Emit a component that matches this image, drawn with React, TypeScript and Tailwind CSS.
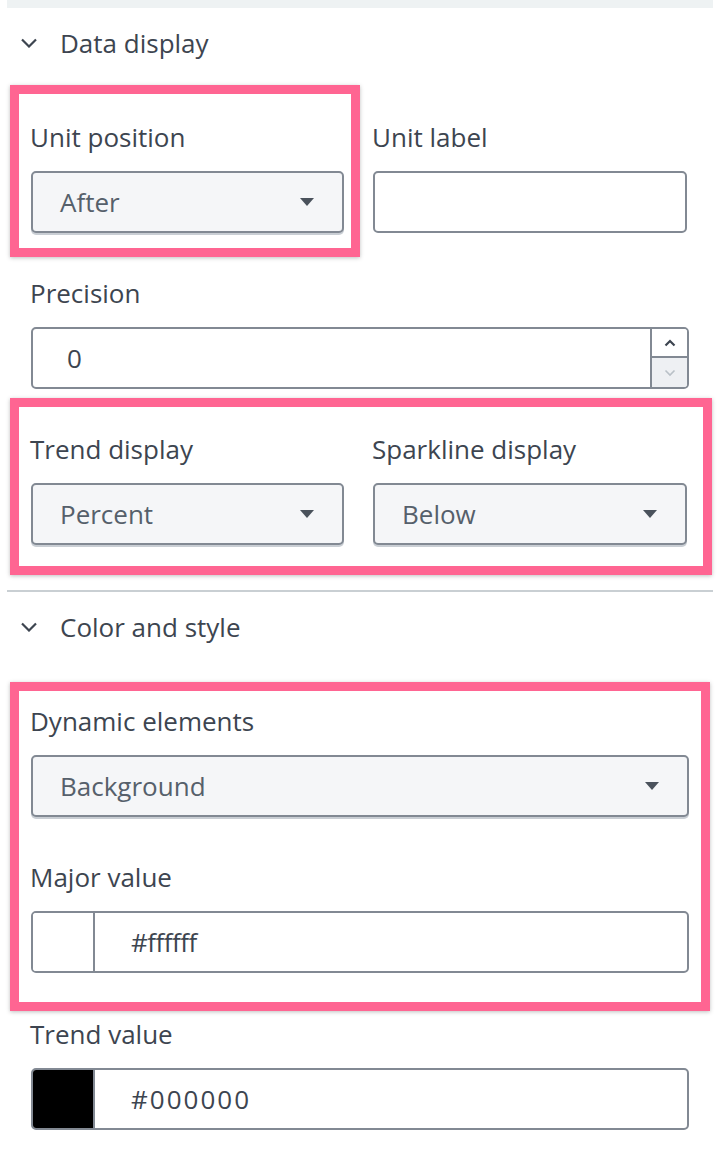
import React from "react";

const font = { fontFamily: "'Open Sans', 'Liberation Sans', sans-serif" };

function Chevron() {
  return (
    <svg width="18" height="10" viewBox="0 0 18 10" className="text-[#3d4550]">
      <path d="M2 1.5 L9 8.5 L16 1.5" fill="none" stroke="currentColor" strokeWidth="2.2" />
    </svg>
  );
}

function Caret() {
  return (
    <svg width="14" height="8" viewBox="0 0 14 8">
      <path d="M0 0 H14 L7 8 Z" fill="#4a525c" />
    </svg>
  );
}

function Highlight({ className }: { className: string }) {
  return (
    <div
      className={`pointer-events-none absolute border-[9px] border-[#ff6592] shadow-[0_1px_4px_rgba(0,0,0,0.25)] ${className}`}
    />
  );
}

function Label({ children }: { children: React.ReactNode }) {
  return <div className="-ml-px h-[32px] text-[26px] leading-[32px] text-[#3d4550]">{children}</div>;
}

function Select({ value }: { value: string }) {
  return (
    <div className="mt-[18px] flex h-[62px] items-center justify-between rounded-[5px] border-2 border-[#828993] bg-[#f5f6f8] pl-[27px] pr-[28px] shadow-[0_2px_0_#c9ced4]">
      <span className="text-[26px] text-[#56606b]">{value}</span>
      <Caret />
    </div>
  );
}

function ColorField({ swatch, value, track }: { swatch: string; value: string; track: string }) {
  return (
    <div className="mt-[18px] flex h-[62px] overflow-hidden rounded-[5px] border-2 border-[#828993] bg-white">
      <div className={`w-[62px] border-r-2 border-[#828993] ${swatch}`} />
      <div className={`flex items-center pl-[36px] text-[26px] text-[#3d4550] ${track}`}>{value}</div>
    </div>
  );
}

function Header({ title }: { title: string }) {
  return (
    <div className="flex h-[32px] items-center pl-[20px]">
      <Chevron />
      <span className="ml-[22px] text-[26px] leading-[32px] text-[#3d4550]">{title}</span>
    </div>
  );
}

export default function App() {
  return (
    <div className="h-[1156px] w-[720px] overflow-hidden bg-white" style={font}>
      <div className="mx-[7px] h-[8px] bg-[#eef2f3]" />
      <div className="mt-[19px]">
        <Header title="Data display" />
      </div>

      <div className="px-[31px]">
        <div className="mt-[62px] grid grid-cols-[313px_314px] gap-x-[29px]">
          <div className="relative">
            <Highlight className="-top-[36px] -bottom-[24px] -left-[21px] -right-[16px]" />
            <Label>Unit position</Label>
            <Select value="After" />
          </div>
          <div>
            <Label>Unit label</Label>
            <div className="mt-[18px] h-[62px] rounded-[5px] border-2 border-[#828993] bg-white" />
          </div>
        </div>

        <div className="mt-[44px]">
          <Label>Precision</Label>
          <div className="mt-[18px] flex h-[62px] overflow-hidden rounded-[5px] border-2 border-[#828993] bg-white">
            <div className="flex flex-1 items-center pl-[34px] text-[26px] text-[#3d4550]">0</div>
            <div className="flex w-[37px] flex-col border-l-2 border-[#828993]">
              <div className="flex h-[29px] items-center justify-center border-b-2 border-[#828993] bg-white">
                <svg width="12" height="8" viewBox="0 0 12 8">
                  <path d="M1.5 6.5 L6 2 L10.5 6.5" fill="none" stroke="#3d4550" strokeWidth="2.2" />
                </svg>
              </div>
              <div className="flex flex-1 items-center justify-center bg-[#eef0f3]">
                <svg width="12" height="8" viewBox="0 0 12 8">
                  <path d="M1.5 1.5 L6 6 L10.5 1.5" fill="none" stroke="#b9c0c7" strokeWidth="1.6" />
                </svg>
              </div>
            </div>
          </div>
        </div>

        <div className="relative mt-[44px] grid grid-cols-[313px_314px] gap-x-[29px]">
          <Highlight className="-top-[35px] -bottom-[30px] -left-[21px] -right-[23px]" />
          <div>
            <Label>Trend display</Label>
            <Select value="Percent" />
          </div>
          <div>
            <Label>Sparkline display</Label>
            <Select value="Below" />
          </div>
        </div>
      </div>

      <div className="mx-[7px] mt-[45px] h-[2px] bg-[#c9cfd3]" />
      <div className="mt-[19px]">
        <Header title="Color and style" />
      </div>

      <div className="px-[31px]">
        <div className="relative mt-[62px]">
          <Highlight className="-top-[23px] -bottom-[38px] -left-[21px] -right-[21px]" />
          <Label>Dynamic elements</Label>
          <Select value="Background" />
          <div className="mt-[44px]">
            <Label>Major value</Label>
            <ColorField swatch="bg-white" value="#ffffff" track="tracking-[-0.5px]" />
          </div>
        </div>

        <div className="mt-[45px]">
          <Label>Trend value</Label>
          <ColorField swatch="bg-black" value="#000000" track="tracking-[2px]" />
        </div>
      </div>
    </div>
  );
}
